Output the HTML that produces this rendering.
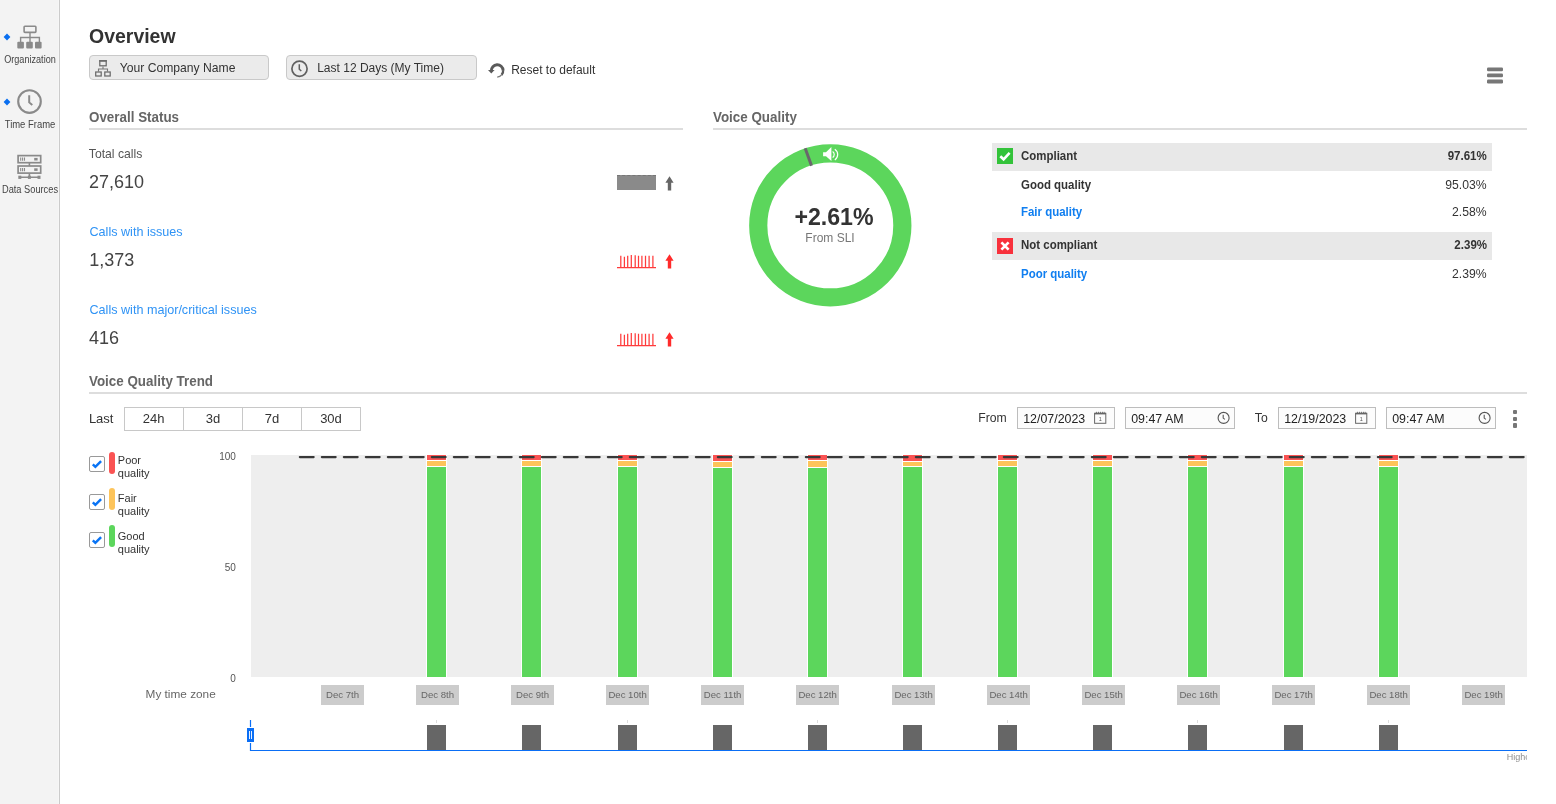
<!DOCTYPE html>
<html><head><meta charset="utf-8"><style>
html,body{margin:0;padding:0;width:1556px;height:804px;overflow:hidden;background:#fff;font-family:"Liberation Sans", sans-serif;}
.t{position:absolute;line-height:1;white-space:nowrap;}
body{will-change:transform}
.r{position:absolute;}
svg.r{overflow:visible}
</style></head><body>
<div class="r" style="left:0px;top:0px;width:59px;height:804px;background:#f3f3f3"></div>
<div class="r" style="left:58px;top:0px;width:1px;height:804px;background:#f6f6f6"></div>
<div class="r" style="left:59px;top:0px;width:1px;height:804px;background:#cbcbcb"></div>
<svg class="r" style="left:3px;top:33px" width="8" height="8"><path d="M4 0.6 L7.4 4 L4 7.4 L0.6 4Z" fill="#0a6ff0"/></svg>
<svg class="r" style="left:3px;top:98px" width="8" height="8"><path d="M4 0.6 L7.4 4 L4 7.4 L0.6 4Z" fill="#0a6ff0"/></svg>
<svg class="r" style="left:15px;top:23px" width="30" height="28" viewBox="0 0 30 28">
<rect x="9.1" y="3.2" width="11.8" height="6.2" rx="0.8" fill="none" stroke="#8a8a8a" stroke-width="1.6"/>
<path d="M15 9.4V14.5 M5.6 19V14.5H24.4V19 M15 14.5V19" fill="none" stroke="#8a8a8a" stroke-width="1.4"/>
<rect x="2.3" y="18.8" width="6.6" height="6.8" rx="1" fill="#8a8a8a"/>
<rect x="11.2" y="18.8" width="6.6" height="6.8" rx="1" fill="#8a8a8a"/>
<rect x="20" y="18.8" width="6.6" height="6.8" rx="1" fill="#8a8a8a"/>
</svg>
<div class="t" style="left:-170.50px;width:400px;text-align:center;top:55.00px;font-size:10px;color:#444;font-weight:normal;transform:scale(0.91,1);transform-origin:center 8.47px;">Organization</div>
<svg class="r" style="left:15px;top:87px" width="30" height="30" viewBox="0 0 30 30">
<circle cx="14.5" cy="14.6" r="11.3" fill="none" stroke="#8a8a8a" stroke-width="2.1"/>
<path d="M14.2 8.3V15.4L17.3 18" fill="none" stroke="#8a8a8a" stroke-width="2"/>
</svg>
<div class="t" style="left:-170.10px;width:400px;text-align:center;top:120.00px;font-size:10px;color:#444;font-weight:normal;transform:scale(0.945,1);transform-origin:center 8.47px;">Time Frame</div>
<svg class="r" style="left:15px;top:152px" width="30" height="30" viewBox="0 0 30 30">
<rect x="3.1" y="3.6" width="22.6" height="7.1" fill="none" stroke="#8a8a8a" stroke-width="1.7"/>
<rect x="3.1" y="14" width="22.6" height="7.1" fill="none" stroke="#8a8a8a" stroke-width="1.7"/>
<path d="M5.7 5.6V8.8 M7.6 5.6V8.8 M9.5 5.6V8.8 M5.7 16V19.2 M7.6 16V19.2 M9.5 16V19.2" stroke="#8a8a8a" stroke-width="1.1"/>
<rect x="19.2" y="5.9" width="3.4" height="2.6" fill="#8a8a8a"/>
<rect x="19.2" y="16.3" width="3.4" height="2.6" fill="#8a8a8a"/>
<path d="M14.4 10.7V14 M14.4 21V25.3 M4.5 25.3H24.5" stroke="#8a8a8a" stroke-width="1.6"/>
<rect x="3.3" y="23.7" width="3" height="3.2" fill="#8a8a8a"/><rect x="12.9" y="23.7" width="3" height="3.2" fill="#8a8a8a"/><rect x="22.5" y="23.7" width="3" height="3.2" fill="#8a8a8a"/>
</svg>
<div class="t" style="left:-170.30px;width:400px;text-align:center;top:185.00px;font-size:10px;color:#444;font-weight:normal;transform:scale(0.925,1);transform-origin:center 8.47px;">Data Sources</div>
<div class="t" style="left:89.00px;top:26.00px;font-size:20.3px;color:#333;font-weight:bold;transform:scale(0.96,1);transform-origin:left 17.19px;">Overview</div>
<div class="r" style="left:89px;top:55px;width:180px;height:25px;background:#ebebeb;border:1px solid #c9c9c9;border-radius:4px;box-sizing:border-box"></div>
<svg class="r" style="left:94px;top:59px" width="18" height="19" viewBox="0 0 18 19">
<rect x="5.8" y="1.7" width="6.4" height="5.1" fill="none" stroke="#6a6a6a" stroke-width="1.25"/>
<path d="M5.2 1.9H12.8" stroke="#6a6a6a" stroke-width="1.6"/>
<path d="M9 7.4V9.9 M4.5 12.6V10H13.5V12.6" fill="none" stroke="#777" stroke-width="1.1"/>
<rect x="1.7" y="13" width="5.5" height="4" fill="none" stroke="#6a6a6a" stroke-width="1.25"/>
<rect x="10.8" y="13" width="5.4" height="4" fill="none" stroke="#6a6a6a" stroke-width="1.25"/>
</svg>
<div class="t" style="left:119.80px;top:62.00px;font-size:12.15px;color:#333;font-weight:normal;">Your Company Name</div>
<div class="r" style="left:286px;top:55px;width:191px;height:25px;background:#ebebeb;border:1px solid #c9c9c9;border-radius:4px;box-sizing:border-box"></div>
<svg class="r" style="left:290px;top:59px" width="19" height="19" viewBox="0 0 19 19">
<circle cx="9.5" cy="9.7" r="7.6" fill="none" stroke="#606060" stroke-width="1.7"/>
<path d="M9.3 5.3V10.2L11.3 12" fill="none" stroke="#606060" stroke-width="1.5"/>
</svg>
<div class="t" style="left:317.20px;top:62.00px;font-size:12px;color:#333;font-weight:normal;">Last 12 Days (My Time)</div>
<svg class="r" style="left:482px;top:58px" width="30" height="24" viewBox="0 0 30 24">
<path d="M9.3 12.9 A5.9 5.9 0 0 1 21.1 12.4" fill="none" stroke="#5a5a5a" stroke-width="2.9"/>
<path d="M21.1 12.1 A5.9 5.9 0 0 1 19.6 16.9" fill="none" stroke="#5a5a5a" stroke-width="2.3"/>
<path d="M19.8 16.7 A6.4 6.4 0 0 1 15.2 19.2" fill="none" stroke="#7a7a7a" stroke-width="1.2"/>
<path d="M6 12.1 L12.6 12.1 L9.3 15.6Z" fill="#5a5a5a"/>
</svg>
<div class="t" style="left:511.20px;top:64.00px;font-size:12px;color:#333;font-weight:normal;">Reset to default</div>
<svg class="r" style="left:1480px;top:60px" width="30" height="30" viewBox="1480 60 30 30"><g fill="#777"><rect x="1487" y="67.4" width="16" height="3.8" rx="1.2"/><rect x="1487" y="73.5" width="16" height="3.8" rx="1.2"/><rect x="1487" y="79.6" width="16" height="3.8" rx="1.2"/></g></svg>
<div class="t" style="left:88.90px;top:111.00px;font-size:13px;color:#666;font-weight:bold;transform:scale(1.03,1.07);transform-origin:left 11.01px;">Overall Status</div>
<div class="r" style="left:89px;top:128px;width:594px;height:2px;background:#dddddd"></div>
<div class="t" style="left:88.80px;top:148.00px;font-size:12.2px;color:#555;font-weight:normal;">Total calls</div>
<div class="t" style="left:89.00px;top:173.00px;font-size:18px;color:#444;font-weight:normal;">27,610</div>
<div class="t" style="left:89.50px;top:226.00px;font-size:12.6px;color:#2f93f5;font-weight:normal;">Calls with issues</div>
<div class="t" style="left:89.20px;top:251.00px;font-size:18px;color:#444;font-weight:normal;">1,373</div>
<div class="t" style="left:89.50px;top:304.00px;font-size:12.6px;color:#2f93f5;font-weight:normal;">Calls with major/critical issues</div>
<div class="t" style="left:89.00px;top:329.00px;font-size:18px;color:#444;font-weight:normal;">416</div>
<div class="r" style="left:617px;top:175px;width:39px;height:15px;background:#8a8a8a;border-top:1px dashed #777;box-sizing:border-box"></div>
<svg class="r" style="left:664.6px;top:176px" width="10" height="16" viewBox="0 0 10 16"><path d="M4.5 0.2 L8.6 6.8 H6.2 V14.6 H2.8 V6.8 H0.4Z" fill="#666"/></svg>
<svg class="r" style="left:617px;top:254.0px" width="40" height="15" viewBox="0 0 40 15"><path d="M0 13.6H39 M3.8 13 V1.8 M7.4 13 V2.8 M10.7 13 V1.8 M14.3 13 V1.0 M18.2 13 V1.3 M21.5 13 V1.8 M24.9 13 V1.8 M28.5 13 V1.8 M32.1 13 V1.8 M35.9 13 V1.8" fill="none" stroke="#ff3b3b" stroke-width="1.25"/></svg>
<svg class="r" style="left:664.6px;top:254.3px" width="10" height="16" viewBox="0 0 10 16"><path d="M4.5 0.2 L8.6 6.8 H6.2 V14.6 H2.8 V6.8 H0.4Z" fill="#ff2b2b"/></svg>
<svg class="r" style="left:617px;top:332.0px" width="40" height="15" viewBox="0 0 40 15"><path d="M0 13.6H39 M3.8 13 V1.8 M7.4 13 V2.8 M10.7 13 V1.8 M14.3 13 V1.0 M18.2 13 V1.3 M21.5 13 V1.8 M24.9 13 V1.8 M28.5 13 V1.8 M32.1 13 V1.8 M35.9 13 V1.8" fill="none" stroke="#ff3b3b" stroke-width="1.25"/></svg>
<svg class="r" style="left:664.6px;top:332.3px" width="10" height="16" viewBox="0 0 10 16"><path d="M4.5 0.2 L8.6 6.8 H6.2 V14.6 H2.8 V6.8 H0.4Z" fill="#ff2b2b"/></svg>
<div class="t" style="left:712.90px;top:111.00px;font-size:13px;color:#666;font-weight:bold;transform:scale(1.03,1.07);transform-origin:left 11.01px;">Voice Quality</div>
<div class="r" style="left:713px;top:128px;width:814px;height:2px;background:#dddddd"></div>
<svg class="r" style="left:740px;top:136px" width="182" height="182" viewBox="740 136 182 182">
<circle cx="830.3" cy="225.4" r="72.05" fill="none" stroke="#5cd65c" stroke-width="18.2"/>
<path d="M805.2 148.2 L811.5 165.8" stroke="#6a666c" stroke-width="3"/>
<g fill="#fff">
<path d="M823.1 152.2H826L831.4 147.1V161L826 156.2H823.1Z"/>
</g>
<path d="M832.6 151.6 A3.6 3.6 0 0 1 832.6 157.6 M834.8 149.2 A6.5 6.5 0 0 1 834.8 160" fill="none" stroke="#fff" stroke-width="1.2"/>
</svg>
<div class="t" style="left:634.00px;width:400px;text-align:center;top:205.00px;font-size:24px;color:#333;font-weight:bold;transform:scale(0.965,1);transform-origin:center 20.32px;">+2.61%</div>
<div class="t" style="left:630.00px;width:400px;text-align:center;top:232.00px;font-size:12px;color:#777;font-weight:normal;">From SLI</div>
<div class="r" style="left:992px;top:143px;width:500px;height:28px;background:#e8e8e8"></div>
<svg class="r" style="left:997px;top:148px" width="16" height="16"><rect width="16" height="16" fill="#33c33a"/><path d="M3.3 8.2 L6.6 11.3 L12.6 4.8" fill="none" stroke="#fff" stroke-width="2.6"/></svg>
<div class="t" style="left:1020.80px;top:150.00px;font-size:12px;color:#333;font-weight:bold;transform:scale(0.955,1);transform-origin:left 10.16px;">Compliant</div>
<div class="t" style="right:69.40px;top:150.00px;font-size:12px;color:#333;font-weight:bold;text-align:right;transform:scale(0.96,1);transform-origin:right 10.16px;">97.61%</div>
<div class="t" style="left:1020.80px;top:179.00px;font-size:12px;color:#333;font-weight:bold;transform:scale(0.955,1);transform-origin:left 10.16px;">Good quality</div>
<div class="t" style="right:69.40px;top:179.00px;font-size:12.2px;color:#333;font-weight:normal;text-align:right;">95.03%</div>
<div class="t" style="left:1020.80px;top:206.00px;font-size:12px;color:#0f7ef0;font-weight:bold;transform:scale(0.955,1);transform-origin:left 10.16px;">Fair quality</div>
<div class="t" style="right:69.40px;top:206.00px;font-size:12.2px;color:#333;font-weight:normal;text-align:right;">2.58%</div>
<div class="r" style="left:992px;top:232px;width:500px;height:28px;background:#e8e8e8"></div>
<svg class="r" style="left:997px;top:237.5px" width="16" height="16"><rect width="16" height="16" fill="#f8313c"/><path d="M4.4 4.4 L11.6 11.6 M11.6 4.4 L4.4 11.6" fill="none" stroke="#fff" stroke-width="2.7"/></svg>
<div class="t" style="left:1020.80px;top:239.00px;font-size:12px;color:#333;font-weight:bold;transform:scale(0.955,1);transform-origin:left 10.16px;">Not compliant</div>
<div class="t" style="right:69.40px;top:239.00px;font-size:12px;color:#333;font-weight:bold;text-align:right;transform:scale(0.96,1);transform-origin:right 10.16px;">2.39%</div>
<div class="t" style="left:1020.80px;top:268.00px;font-size:12px;color:#0f7ef0;font-weight:bold;transform:scale(0.955,1);transform-origin:left 10.16px;">Poor quality</div>
<div class="t" style="right:69.40px;top:268.00px;font-size:12.2px;color:#333;font-weight:normal;text-align:right;">2.39%</div>
<div class="t" style="left:88.90px;top:375.00px;font-size:13px;color:#666;font-weight:bold;transform:scale(1.03,1.07);transform-origin:left 11.01px;">Voice Quality Trend</div>
<div class="r" style="left:89px;top:392px;width:1438px;height:2px;background:#dddddd"></div>
<div class="t" style="left:88.90px;top:412.00px;font-size:13px;color:#333;font-weight:normal;">Last</div>
<div class="r" style="left:124px;top:407px;width:237px;height:24px;border:1px solid #c8c8c8;box-sizing:border-box;background:#fff"></div>
<div class="r" style="left:183px;top:407px;width:1px;height:24px;background:#c8c8c8"></div>
<div class="r" style="left:242px;top:407px;width:1px;height:24px;background:#c8c8c8"></div>
<div class="r" style="left:301px;top:407px;width:1px;height:24px;background:#c8c8c8"></div>
<div class="t" style="left:-46.40px;width:400px;text-align:center;top:412.00px;font-size:13px;color:#333;font-weight:normal;">24h</div>
<div class="t" style="left:13.00px;width:400px;text-align:center;top:412.00px;font-size:13px;color:#333;font-weight:normal;">3d</div>
<div class="t" style="left:72.00px;width:400px;text-align:center;top:412.00px;font-size:13px;color:#333;font-weight:normal;">7d</div>
<div class="t" style="left:131.00px;width:400px;text-align:center;top:412.00px;font-size:13px;color:#333;font-weight:normal;">30d</div>
<div class="t" style="left:978.20px;top:412.00px;font-size:12.2px;color:#333;font-weight:normal;">From</div>
<div class="t" style="left:1254.80px;top:412.00px;font-size:12.2px;color:#333;font-weight:normal;">To</div>
<div class="r" style="left:1017px;top:407px;width:98px;height:22px;border:1px solid #bdbdbd;box-sizing:border-box;background:#fcfcfc"></div>
<div class="t" style="left:1023.20px;top:413.00px;font-size:12.4px;color:#222;font-weight:normal;">12/07/2023</div>
<svg class="r" style="left:1093.5px;top:411px" width="13" height="14" viewBox="0 0 13 14"><rect x="0.6" y="2.3" width="11.2" height="10" fill="none" stroke="#666" stroke-width="1"/><path d="M0.6 2.6H11.8" stroke="#666" stroke-width="1.6"/><path d="M2.5 0.8V2.4 M4.5 0.8V2.4 M6.5 0.8V2.4 M8.5 0.8V2.4 M10.2 0.8V2.4" stroke="#666" stroke-width="0.8"/><text x="6.2" y="10.2" font-size="5.5" text-anchor="middle" fill="#555" font-family="Liberation Sans">1</text></svg>
<div class="r" style="left:1125px;top:407px;width:110px;height:22px;border:1px solid #bdbdbd;box-sizing:border-box;background:#fcfcfc"></div>
<div class="t" style="left:1131.20px;top:413.00px;font-size:12.4px;color:#222;font-weight:normal;">09:47 AM</div>
<svg class="r" style="left:1216.5px;top:411px" width="14" height="14" viewBox="0 0 14 14"><circle cx="6.6" cy="6.9" r="5.5" fill="none" stroke="#555" stroke-width="1.1"/><path d="M6.2 3.8V7.1L7.9 8.4" fill="none" stroke="#555" stroke-width="1.1"/></svg>
<div class="r" style="left:1278px;top:407px;width:98px;height:22px;border:1px solid #bdbdbd;box-sizing:border-box;background:#fcfcfc"></div>
<div class="t" style="left:1284.20px;top:413.00px;font-size:12.4px;color:#222;font-weight:normal;">12/19/2023</div>
<svg class="r" style="left:1354.6px;top:411px" width="13" height="14" viewBox="0 0 13 14"><rect x="0.6" y="2.3" width="11.2" height="10" fill="none" stroke="#666" stroke-width="1"/><path d="M0.6 2.6H11.8" stroke="#666" stroke-width="1.6"/><path d="M2.5 0.8V2.4 M4.5 0.8V2.4 M6.5 0.8V2.4 M8.5 0.8V2.4 M10.2 0.8V2.4" stroke="#666" stroke-width="0.8"/><text x="6.2" y="10.2" font-size="5.5" text-anchor="middle" fill="#555" font-family="Liberation Sans">1</text></svg>
<div class="r" style="left:1386px;top:407px;width:110px;height:22px;border:1px solid #bdbdbd;box-sizing:border-box;background:#fcfcfc"></div>
<div class="t" style="left:1392.20px;top:413.00px;font-size:12.4px;color:#222;font-weight:normal;">09:47 AM</div>
<svg class="r" style="left:1477.5px;top:411px" width="14" height="14" viewBox="0 0 14 14"><circle cx="6.6" cy="6.9" r="5.5" fill="none" stroke="#555" stroke-width="1.1"/><path d="M6.2 3.8V7.1L7.9 8.4" fill="none" stroke="#555" stroke-width="1.1"/></svg>
<div class="r" style="left:1513px;top:409.9px;width:4.4px;height:4.4px;background:#777;border-radius:1px"></div>
<div class="r" style="left:1513px;top:416.6px;width:4.4px;height:4.4px;background:#777;border-radius:1px"></div>
<div class="r" style="left:1513px;top:423.3px;width:4.4px;height:4.4px;background:#777;border-radius:1px"></div>
<svg class="r" style="left:89px;top:456px" width="16" height="16"><rect x="0.5" y="0.5" width="15" height="15" rx="1.5" fill="#fff" stroke="#999"/><path d="M3.8 8.3 L6.4 10.8 L12.1 5.1" fill="none" stroke="#0a74f5" stroke-width="2.5"/></svg>
<div class="r" style="left:109px;top:452px;width:6px;height:22px;background:#fa5353;border-radius:3px"></div>
<div class="t" style="left:117.80px;top:455.00px;font-size:11px;color:#333;font-weight:normal;">Poor</div>
<div class="t" style="left:117.80px;top:468.00px;font-size:11px;color:#333;font-weight:normal;">quality</div>
<svg class="r" style="left:89px;top:494px" width="16" height="16"><rect x="0.5" y="0.5" width="15" height="15" rx="1.5" fill="#fff" stroke="#999"/><path d="M3.8 8.3 L6.4 10.8 L12.1 5.1" fill="none" stroke="#0a74f5" stroke-width="2.5"/></svg>
<div class="r" style="left:109px;top:488px;width:6px;height:22px;background:#fdc45a;border-radius:3px"></div>
<div class="t" style="left:117.80px;top:493.00px;font-size:11px;color:#333;font-weight:normal;">Fair</div>
<div class="t" style="left:117.80px;top:506.00px;font-size:11px;color:#333;font-weight:normal;">quality</div>
<svg class="r" style="left:89px;top:532px" width="16" height="16"><rect x="0.5" y="0.5" width="15" height="15" rx="1.5" fill="#fff" stroke="#999"/><path d="M3.8 8.3 L6.4 10.8 L12.1 5.1" fill="none" stroke="#0a74f5" stroke-width="2.5"/></svg>
<div class="r" style="left:109px;top:525px;width:6px;height:22px;background:#5cd65c;border-radius:3px"></div>
<div class="t" style="left:117.80px;top:531.00px;font-size:11px;color:#333;font-weight:normal;">Good</div>
<div class="t" style="left:117.80px;top:544.00px;font-size:11px;color:#333;font-weight:normal;">quality</div>
<div class="r" style="left:251px;top:455px;width:1276px;height:222px;background:#eeeeee"></div>
<div class="t" style="right:1320.20px;top:452.00px;font-size:10px;color:#555;font-weight:normal;text-align:right;">100</div>
<div class="t" style="right:1320.20px;top:563.00px;font-size:10px;color:#555;font-weight:normal;text-align:right;">50</div>
<div class="t" style="right:1320.20px;top:674.00px;font-size:10px;color:#555;font-weight:normal;text-align:right;">0</div>
<div class="t" style="left:145.60px;top:689.00px;font-size:11.8px;color:#666;font-weight:normal;">My time zone</div>
<svg class="r" style="left:0;top:0" width="1556" height="804"><rect x="426" y="455" width="21" height="222" fill="#fff"/><rect x="427" y="455" width="19" height="5" fill="#fa5353"/><rect x="427" y="461" width="19" height="5" fill="#fdc45a"/><rect x="427" y="467" width="19" height="210" fill="#5cd65c"/><rect x="521" y="455" width="21" height="222" fill="#fff"/><rect x="522" y="455" width="19" height="5" fill="#fa5353"/><rect x="522" y="461" width="19" height="5" fill="#fdc45a"/><rect x="522" y="467" width="19" height="210" fill="#5cd65c"/><rect x="617" y="455" width="21" height="222" fill="#fff"/><rect x="618" y="455" width="19" height="5" fill="#fa5353"/><rect x="618" y="461" width="19" height="5" fill="#fdc45a"/><rect x="618" y="467" width="19" height="210" fill="#5cd65c"/><rect x="712" y="455" width="21" height="222" fill="#fff"/><rect x="713" y="455" width="19" height="6" fill="#fa5353"/><rect x="713" y="462" width="19" height="5" fill="#fdc45a"/><rect x="713" y="468" width="19" height="209" fill="#5cd65c"/><rect x="807" y="455" width="21" height="222" fill="#fff"/><rect x="808" y="455" width="19" height="5" fill="#fa5353"/><rect x="808" y="461" width="19" height="6" fill="#fdc45a"/><rect x="808" y="468" width="19" height="209" fill="#5cd65c"/><rect x="902" y="455" width="21" height="222" fill="#fff"/><rect x="903" y="455" width="19" height="6" fill="#fa5353"/><rect x="903" y="462" width="19" height="4" fill="#fdc45a"/><rect x="903" y="467" width="19" height="210" fill="#5cd65c"/><rect x="997" y="455" width="21" height="222" fill="#fff"/><rect x="998" y="455" width="19" height="5" fill="#fa5353"/><rect x="998" y="461" width="19" height="5" fill="#fdc45a"/><rect x="998" y="467" width="19" height="210" fill="#5cd65c"/><rect x="1092" y="455" width="21" height="222" fill="#fff"/><rect x="1093" y="455" width="19" height="5" fill="#fa5353"/><rect x="1093" y="461" width="19" height="5" fill="#fdc45a"/><rect x="1093" y="467" width="19" height="210" fill="#5cd65c"/><rect x="1187" y="455" width="21" height="222" fill="#fff"/><rect x="1188" y="455" width="19" height="5" fill="#fa5353"/><rect x="1188" y="461" width="19" height="5" fill="#fdc45a"/><rect x="1188" y="467" width="19" height="210" fill="#5cd65c"/><rect x="1283" y="455" width="21" height="222" fill="#fff"/><rect x="1284" y="455" width="19" height="5" fill="#fa5353"/><rect x="1284" y="461" width="19" height="5" fill="#fdc45a"/><rect x="1284" y="467" width="19" height="210" fill="#5cd65c"/><rect x="1378" y="455" width="21" height="222" fill="#fff"/><rect x="1379" y="455" width="19" height="5" fill="#fa5353"/><rect x="1379" y="461" width="19" height="5" fill="#fdc45a"/><rect x="1379" y="467" width="19" height="210" fill="#5cd65c"/><path d="M299.8 457.1H1526" stroke="#383838" stroke-width="2.1" stroke-dasharray="13.9 8.1" stroke-linecap="round"/></svg>
<div class="r" style="left:321px;top:685px;width:43px;height:20px;background:#cccccc"></div>
<div class="t" style="left:142.60px;width:400px;text-align:center;top:690.00px;font-size:9.6px;color:#666;font-weight:normal;">Dec 7th</div>
<div class="r" style="left:416px;top:685px;width:43px;height:20px;background:#cccccc"></div>
<div class="t" style="left:237.60px;width:400px;text-align:center;top:690.00px;font-size:9.6px;color:#666;font-weight:normal;">Dec 8th</div>
<div class="r" style="left:511px;top:685px;width:43px;height:20px;background:#cccccc"></div>
<div class="t" style="left:332.60px;width:400px;text-align:center;top:690.00px;font-size:9.6px;color:#666;font-weight:normal;">Dec 9th</div>
<div class="r" style="left:606px;top:685px;width:43px;height:20px;background:#cccccc"></div>
<div class="t" style="left:427.60px;width:400px;text-align:center;top:690.00px;font-size:9.6px;color:#666;font-weight:normal;">Dec 10th</div>
<div class="r" style="left:701px;top:685px;width:43px;height:20px;background:#cccccc"></div>
<div class="t" style="left:522.60px;width:400px;text-align:center;top:690.00px;font-size:9.6px;color:#666;font-weight:normal;">Dec 11th</div>
<div class="r" style="left:796px;top:685px;width:43px;height:20px;background:#cccccc"></div>
<div class="t" style="left:617.60px;width:400px;text-align:center;top:690.00px;font-size:9.6px;color:#666;font-weight:normal;">Dec 12th</div>
<div class="r" style="left:892px;top:685px;width:43px;height:20px;background:#cccccc"></div>
<div class="t" style="left:713.60px;width:400px;text-align:center;top:690.00px;font-size:9.6px;color:#666;font-weight:normal;">Dec 13th</div>
<div class="r" style="left:987px;top:685px;width:43px;height:20px;background:#cccccc"></div>
<div class="t" style="left:808.60px;width:400px;text-align:center;top:690.00px;font-size:9.6px;color:#666;font-weight:normal;">Dec 14th</div>
<div class="r" style="left:1082px;top:685px;width:43px;height:20px;background:#cccccc"></div>
<div class="t" style="left:903.60px;width:400px;text-align:center;top:690.00px;font-size:9.6px;color:#666;font-weight:normal;">Dec 15th</div>
<div class="r" style="left:1177px;top:685px;width:43px;height:20px;background:#cccccc"></div>
<div class="t" style="left:998.60px;width:400px;text-align:center;top:690.00px;font-size:9.6px;color:#666;font-weight:normal;">Dec 16th</div>
<div class="r" style="left:1272px;top:685px;width:43px;height:20px;background:#cccccc"></div>
<div class="t" style="left:1093.60px;width:400px;text-align:center;top:690.00px;font-size:9.6px;color:#666;font-weight:normal;">Dec 17th</div>
<div class="r" style="left:1367px;top:685px;width:43px;height:20px;background:#cccccc"></div>
<div class="t" style="left:1188.60px;width:400px;text-align:center;top:690.00px;font-size:9.6px;color:#666;font-weight:normal;">Dec 18th</div>
<div class="r" style="left:1462px;top:685px;width:43px;height:20px;background:#cccccc"></div>
<div class="t" style="left:1283.60px;width:400px;text-align:center;top:690.00px;font-size:9.6px;color:#666;font-weight:normal;">Dec 19th</div>
<svg class="r" style="left:0;top:0" width="1556" height="804"><rect x="427" y="725" width="19" height="25" fill="#666"/><rect x="436" y="720" width="1" height="3" fill="#ddd"/><rect x="522" y="725" width="19" height="25" fill="#666"/><rect x="618" y="725" width="19" height="25" fill="#666"/><rect x="627" y="720" width="1" height="3" fill="#ddd"/><rect x="713" y="725" width="19" height="25" fill="#666"/><rect x="808" y="725" width="19" height="25" fill="#666"/><rect x="817" y="720" width="1" height="3" fill="#ddd"/><rect x="903" y="725" width="19" height="25" fill="#666"/><rect x="998" y="725" width="19" height="25" fill="#666"/><rect x="1007" y="720" width="1" height="3" fill="#ddd"/><rect x="1093" y="725" width="19" height="25" fill="#666"/><rect x="1188" y="725" width="19" height="25" fill="#666"/><rect x="1197" y="720" width="1" height="3" fill="#ddd"/><rect x="1284" y="725" width="19" height="25" fill="#666"/><rect x="1379" y="725" width="19" height="25" fill="#666"/><rect x="1388" y="720" width="1" height="3" fill="#ddd"/><path d="M250.5 720V727 M250.5 743V750.5H1527" fill="none" stroke="#0a6ef5" stroke-width="1.2"/><rect x="247" y="728" width="7" height="14" fill="#0a6ef5"/><path d="M249.5 731V739 M251.5 731V739" stroke="#fff" stroke-width="0.9"/></svg>
<div class="r" style="left:1500px;top:748px;width:27px;height:16px;overflow:hidden"><div class="t" style="left:6.8px;top:4.9px;font-size:9px;color:#8f8f8f">Highcharts.com</div></div>
</body></html>
